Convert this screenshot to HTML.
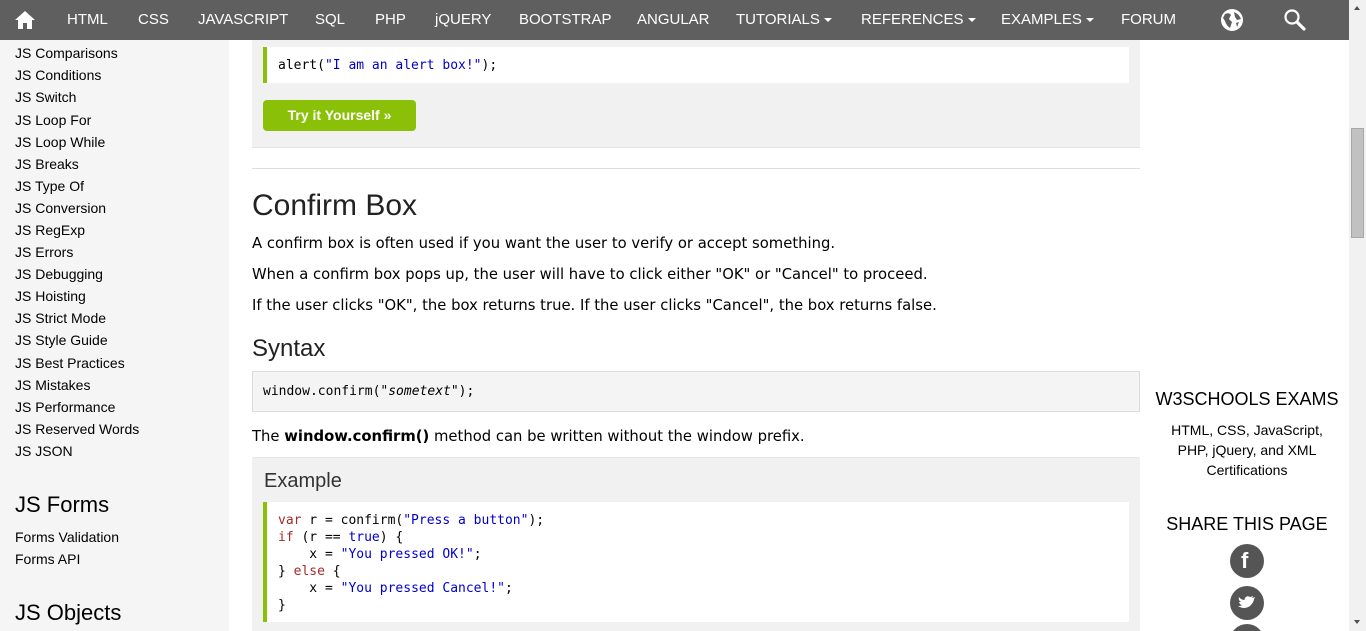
<!DOCTYPE html>
<html style="height:631px;overflow:hidden"><head><meta charset="utf-8">
<style>
*{margin:0;padding:0;box-sizing:border-box}
body{width:1366px;height:631px;overflow:hidden;position:relative;background:#fff;font-family:"Liberation Sans",Arial,sans-serif;color:#000}
.a{position:absolute;white-space:nowrap}
#nav{position:absolute;left:0;top:0;width:1349px;height:40px;background:#5f5f5f}
#nav .a{color:#fff;font-size:15px;top:11px}
.car{display:inline-block;width:0;height:0;border-left:4px solid transparent;border-right:4px solid transparent;border-top:4px solid #fff;vertical-align:middle;margin-left:4px}
#side{position:absolute;left:0;top:40px;width:229px;height:591px;background:#f5f5f5}
#side .i{position:absolute;left:15px;font-size:14px;color:#000}
#side .h{position:absolute;left:15px;font-size:22px;color:#000}
.p{font-family:"DejaVu Sans",Verdana,sans-serif;font-size:14.8px;color:#000;position:absolute;left:252px;white-space:nowrap}
.mono{font-family:"DejaVu Sans Mono","Liberation Mono",monospace;font-size:13px}
.code{position:absolute;background:#fff;border-left:4px solid #8ac007}
.code .l{position:absolute;left:11px;white-space:pre}
.str{color:#0000cd}.kw{color:#a52a2a}
#sb{position:absolute;left:1349px;top:0;width:17px;height:631px;background:#f1f1f1}
.circ{position:absolute;left:1230px;width:34px;height:34px;border-radius:50%;background:#555}
#clip{position:absolute;left:0;top:0;width:1366px;height:631px;overflow:hidden}
</style></head><body><div id="clip">
<div id="nav">
<svg class="a" style="left:14px;top:10px" width="22" height="20" viewBox="0 0 22 20"><path d="M11 1 L1 10 L4 10 L4 19 L9 19 L9 13 L13 13 L13 19 L18 19 L18 10 L21 10 Z" fill="#fff"/></svg>
<span class="a" style="left:67px">HTML</span>
<span class="a" style="left:138px">CSS</span>
<span class="a" style="left:198px">JAVASCRIPT</span>
<span class="a" style="left:315px">SQL</span>
<span class="a" style="left:375px">PHP</span>
<span class="a" style="left:435px">jQUERY</span>
<span class="a" style="left:519px">BOOTSTRAP</span>
<span class="a" style="left:637px">ANGULAR</span>
<span class="a" style="left:736px">TUTORIALS<span class="car"></span></span>
<span class="a" style="left:861px">REFERENCES<span class="car"></span></span>
<span class="a" style="left:1001px">EXAMPLES<span class="car"></span></span>
<span class="a" style="left:1121px">FORUM</span>
<svg class="a" style="left:1220px;top:8px" width="24" height="24" viewBox="0 0 24 24"><circle cx="12" cy="12" r="11" fill="#fff"/><path d="M5 6 Q9 4 11 7 L9 11 L12 14 L10 20 Q6 17 5 13 L3 10 Z M14 4 Q19 6 21 11 L17 12 L15 9 Z M16 15 L19 14 L17 19 Z" fill="#5f5f5f"/></svg>
<svg class="a" style="left:1283px;top:8px" width="24" height="24" viewBox="0 0 24 24"><circle cx="9" cy="9" r="6.5" fill="none" stroke="#fff" stroke-width="2.2"/><path d="M14 14 L21 21" stroke="#fff" stroke-width="3.2" stroke-linecap="round"/></svg>
</div>

<div id="side">
<span class="i" style="top:5px">JS Comparisons</span>
<span class="i" style="top:27px">JS Conditions</span>
<span class="i" style="top:49px">JS Switch</span>
<span class="i" style="top:72px">JS Loop For</span>
<span class="i" style="top:94px">JS Loop While</span>
<span class="i" style="top:116px">JS Breaks</span>
<span class="i" style="top:138px">JS Type Of</span>
<span class="i" style="top:160px">JS Conversion</span>
<span class="i" style="top:182px">JS RegExp</span>
<span class="i" style="top:204px">JS Errors</span>
<span class="i" style="top:226px">JS Debugging</span>
<span class="i" style="top:248px">JS Hoisting</span>
<span class="i" style="top:270px">JS Strict Mode</span>
<span class="i" style="top:292px">JS Style Guide</span>
<span class="i" style="top:315px">JS Best Practices</span>
<span class="i" style="top:337px">JS Mistakes</span>
<span class="i" style="top:359px">JS Performance</span>
<span class="i" style="top:381px">JS Reserved Words</span>
<span class="i" style="top:403px">JS JSON</span>
<span class="h" style="top:452px">JS Forms</span>
<span class="i" style="top:489px">Forms Validation</span>
<span class="i" style="top:511px">Forms API</span>
<span class="h" style="top:560px">JS Objects</span>
</div>

<div style="position:absolute;left:252px;top:40px;width:888px;height:108px;background:#f1f1f1;border-bottom:1px solid #e4e4e4"></div>
<div class="code" style="left:263px;top:47px;width:866px;height:36px"><span class="l mono" style="top:11px">alert(<span class="str">"I am an alert box!"</span>);</span></div>
<div class="a" style="left:263px;top:100px;width:153px;height:31px;background:#8ac007;border-radius:4px;color:#fff;font-weight:bold;font-size:14px;line-height:31px;text-align:center">Try it Yourself »</div>

<div style="position:absolute;left:252px;top:168px;width:888px;height:1px;background:#ddd"></div>
<div class="a" style="left:252px;top:189px;font-size:30px;color:#222">Confirm Box</div>
<div class="p" style="top:235px">A confirm box is often used if you want the user to verify or accept something.</div>
<div class="p" style="top:266px">When a confirm box pops up, the user will have to click either "OK" or "Cancel" to proceed.</div>
<div class="p" style="top:297px">If the user clicks "OK", the box returns true. If the user clicks "Cancel", the box returns false.</div>
<div class="a" style="left:252px;top:335px;font-size:24px;color:#222">Syntax</div>
<div style="position:absolute;left:252px;top:371px;width:888px;height:41px;background:#f4f4f4;border:1px solid #ddd"></div>
<div class="a mono" style="left:263px;top:384px;color:#000">window.confirm("<i>sometext</i>");</div>
<div class="p" style="top:428px">The <b>window.confirm()</b> method can be written without the window prefix.</div>

<div style="position:absolute;left:252px;top:457px;width:888px;height:180px;background:#f1f1f1;border-radius:2px;border-top:1px solid #e4e4e4"></div>
<div class="a" style="left:264px;top:470px;font-size:20px;color:#333">Example</div>
<div class="code" style="left:263px;top:502px;width:866px;height:120px">
<span class="l mono" style="top:11px"><span class="kw">var</span> r = confirm(<span class="str">"Press a button"</span>);</span>
<span class="l mono" style="top:28px"><span class="kw">if</span> (r == <span class="str">true</span>) {</span>
<span class="l mono" style="top:45px">    x = <span class="str">"You pressed OK!"</span>;</span>
<span class="l mono" style="top:62px">} <span class="kw">else</span> {</span>
<span class="l mono" style="top:79px">    x = <span class="str">"You pressed Cancel!"</span>;</span>
<span class="l mono" style="top:96px">}</span>
</div>

<div class="a" style="left:1140px;width:214px;top:389px;text-align:center;font-size:18px;color:#000">W3SCHOOLS EXAMS</div>
<div class="a" style="left:1140px;width:214px;top:420px;text-align:center;font-size:14px;line-height:20px;white-space:normal">HTML, CSS, JavaScript,<br>PHP, jQuery, and XML<br>Certifications</div>
<div class="a" style="left:1140px;width:214px;top:514px;text-align:center;font-size:18px;color:#000">SHARE THIS PAGE</div>
<div class="circ" style="top:544px"><span class="a" style="left:11px;top:4px;color:#fff;font-weight:bold;font-size:22px">f</span></div>
<div class="circ" style="top:586px"><svg class="a" style="left:8px;top:9px" width="18" height="16" viewBox="0 0 18 16"><path d="M17 2 Q15 3 14 3 Q15 2 15 1 Q13 2 12 2 Q9 0 7 3 Q6 5 7 5 Q3 5 1 2 Q0 5 3 7 Q2 7 1 7 Q2 10 4 10 Q3 11 1 11 Q0 11 0 11 Q6 15 12 11 Q16 7 16 4 Q17 3 17 2Z" fill="#fff"/></svg></div>
<div class="circ" style="top:624px"></div>

<div id="sb">
<div style="position:absolute;left:2px;top:128px;width:13px;height:110px;background:#c1c1c1;border:1px solid #a8a8a8"></div>
<div style="position:absolute;left:5px;top:6px;border-left:3.5px solid transparent;border-right:3.5px solid transparent;border-bottom:4px solid #505050"></div>
<div style="position:absolute;left:5px;top:620px;border-left:3.5px solid transparent;border-right:3.5px solid transparent;border-top:4px solid #505050"></div>
</div>
</div></body></html>
